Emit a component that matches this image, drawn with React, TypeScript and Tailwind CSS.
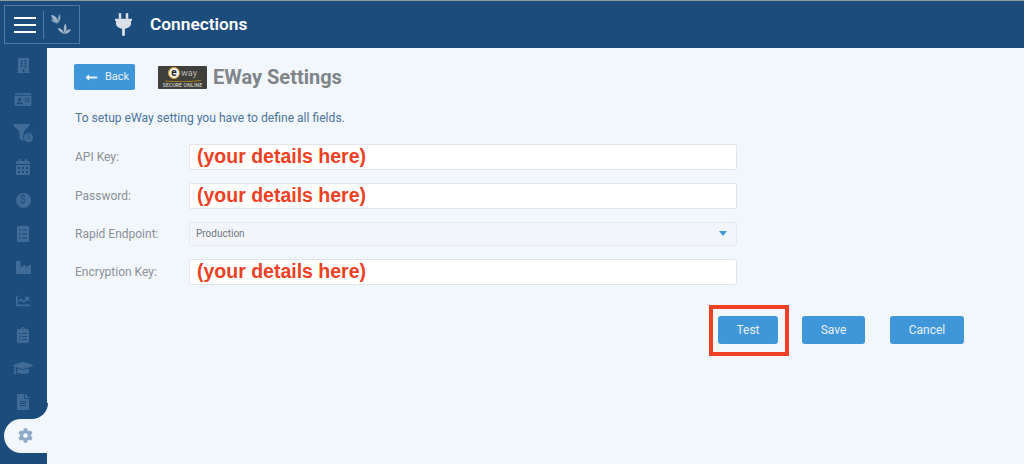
import {
  FaBuilding,
  FaCalendarAlt,
  FaChartLine,
  FaClipboardList,
  FaCog,
  FaFileAlt,
  FaFilter,
  FaGraduationCap,
  FaIdCard,
  FaIndustry,
  FaLongArrowAltLeft,
} from "react-icons/fa";

function CoinIcon() {
  return (
    <div className="flex h-[15px] w-[15px] items-center justify-center rounded-full bg-[#3f6b96] text-[10px] leading-none text-[#1b4c7c]">
      $
    </div>
  );
}

function FilterCoinIcon() {
  return (
    <div className="relative h-[18px] w-[20px]">
      <FaFilter className="h-[17px] w-[17px] text-[#3f6b96]" />
      <div className="absolute bottom-[-1px] right-[-1px] flex h-[11px] w-[11px] items-center justify-center rounded-full border border-[#1b4c7c] bg-[#3f6b96] text-[7px] leading-none text-[#1b4c7c]">
        $
      </div>
    </div>
  );
}

function ChecklistIcon() {
  return (
    <svg viewBox="0 0 12 16" className="h-[16px] w-[12px]">
      <rect width="12" height="16" rx="1" fill="#3f6b96" />
      <path d="M2 4h2M2 8h2M2 12h2M5.500 4H10M5.500 8H10M5.500 12H10" stroke="#1b4c7c" strokeWidth="1" />
    </svg>
  );
}

const navIcons = [
  <FaBuilding key="building" className="h-[17px] w-[13px]" />,
  <FaIdCard key="card" className="h-[15px] w-[18px]" />,
  <FilterCoinIcon key="filter" />,
  <FaCalendarAlt key="calendar" className="h-[16px] w-[14px]" />,
  <CoinIcon key="coin" />,
  <ChecklistIcon key="tasks" />,
  <FaIndustry key="industry" className="h-[15px] w-[17px]" />,
  <FaChartLine key="chart" className="h-[14px] w-[16px]" />,
  <FaClipboardList key="clipboard" className="h-[16px] w-[12px]" />,
  <FaGraduationCap key="cap" className="h-[16px] w-[20px]" />,
  <FaFileAlt key="file" className="h-[16px] w-[12px]" />,
];

function Sidebar() {
  return (
    <aside className="flex w-[47px] shrink-0 flex-col bg-[#1b4c7c] pt-[1px]">
      <div className="flex flex-col">
        {navIcons.map((icon, i) => (
          <div key={i} className="flex h-[33.6px] items-center justify-center pr-[1px] text-[#3f6b96]">
            {icon}
          </div>
        ))}
      </div>
      <div className="relative ml-[4px] flex h-[34px] w-[44px] items-center justify-center rounded-l-[17px] bg-[#f2f7fe] pr-[2px] text-[#8eaac6]">
        <FaCog className="h-[15px] w-[15px]" />
        {/* concave corner above the active item */}
        <div className="absolute bottom-[34px] right-0 h-[16px] w-[16px] bg-[#f2f7fe]">
          <div className="h-full w-full rounded-br-[16px] bg-[#1b4c7c]" />
        </div>
      </div>
    </aside>
  );
}

function LeafMark() {
  return (
    <svg viewBox="0 0 22 22" className="ml-[6px] h-[21px] w-[21px]" fill="#9fb4c8">
      <path d="M9 9C5 8 2 5 1 1c4 0 7 3 8 8z" />
      <path d="M9 9C8 6 8 3 10 0c2 3 1 6-1 9z" opacity=".8" />
      <path d="M9 10C6 10 3 9 1 6c3-1 6 1 8 4z" opacity=".8" />
      <path d="M15 21c-3-1-6-3-7-6 3-1 6 2 7 6z" />
      <path d="M15 20c-1-3-1-7 1-10 2 3 2 7-1 10z" />
      <path d="M15 21c1-3 3-5 7-5-1 3-4 5-7 5z" />
    </svg>
  );
}

function Header() {
  return (
    <header className="flex h-[48px] shrink-0 items-center border-t border-[#8f9aa3] bg-[#1b4c7c] pl-[4px]">
      <div className="flex h-[39px] w-[76px] items-center border border-[#4c7aa5] pl-[9px]">
        <div className="flex w-[22px] flex-col gap-[5px]">
          <div className="h-[2px] bg-white" />
          <div className="h-[2px] bg-white" />
          <div className="h-[2px] bg-white" />
        </div>
        <div className="ml-[7px] h-[28px] w-px bg-[#4c7aa5]" />
        <LeafMark />
      </div>
      <svg viewBox="0 0 18 24" className="ml-[35px] h-[23px] w-[17px]" fill="#d9e0e7">
        <rect x="4" y="0" width="2.6" height="6" />
        <rect x="11.4" y="0" width="2.6" height="6" />
        <path d="M0 6h18v2h-1v3c0 3-3 5-6.500 5.500V24h-3v-7.500C4 16 1 14 1 11V8H0z" />
      </svg>
      <h1 className="ml-[18px] text-[17.300px] font-semibold text-white">Connections</h1>
    </header>
  );
}

function EwayLogo() {
  return (
    <div className="flex h-[23px] w-[49px] flex-col items-center rounded-[1px] bg-[#3f3f3c]">
      <div className="flex h-[14px] items-center gap-[1px] pt-[1px]">
        <div className="flex h-[12px] w-[12px] items-center justify-center rounded-full border border-[#e49a1c] bg-[#f4f4f0] text-[10px] font-bold leading-none text-[#222]">
          e
        </div>
        <span className="text-[9px] leading-none text-[#b9b9b4]">way</span>
      </div>
      <svg viewBox="0 0 40 2" className="h-[2px] w-[40px]" fill="none" stroke="#c58a1e" strokeWidth="0.8">
        <path d="M2 1c12 1 24 1 36-0.500" />
      </svg>
      <span className="mt-[1px] whitespace-nowrap text-[5px] leading-none tracking-[0.2px] text-[#e2e2de]">
        SECURE ONLINE
      </span>
    </div>
  );
}

function TextField({ label }: { label: string }) {
  return (
    <div className="flex items-center">
      <label className="w-[115px] pl-[1px] text-[12px] text-[#8a9097]">{label}</label>
      <div className="flex h-[26px] w-[548px] items-center rounded-[2px] border border-[#e2e5e9] bg-white pl-[7px] font-['Liberation_Sans'] text-[19.500px] font-bold leading-none text-[#ee4023]">
        (your details here)
      </div>
    </div>
  );
}

function SelectField({ label, value }: { label: string; value: string }) {
  return (
    <div className="flex items-center">
      <label className="w-[115px] pl-[1px] text-[12px] text-[#8a9097]">{label}</label>
      <div className="flex h-[24px] w-[548px] items-center justify-between rounded-[2px] border border-[#e6e9ed] bg-[#f2f6fb] pb-[1px] pl-[6px] pr-[9px] text-[10px] text-[#70767d]">
        {value}
        <div className="h-0 w-0 border-x-[4px] border-t-[5px] border-x-transparent border-t-[#3f96d8]" />
      </div>
    </div>
  );
}

function ActionButton({ label, width }: { label: string; width: string }) {
  return (
    <button className={`block h-[28px] rounded-[3px] bg-[#3f96d8] text-[12px] text-[#e8f2fa] ${width}`}>
      {label}
    </button>
  );
}

export default function App() {
  return (
    <div className="flex h-[464px] w-[1024px] flex-col overflow-hidden bg-[#f2f7fe] font-['Roboto',sans-serif]">
      <Header />
      <div className="flex min-h-0 flex-1">
        <Sidebar />
        <main className="flex-1 pl-[27px] pt-[16px]">
          <div className="flex h-[26px] items-center">
            <button className="flex h-[26px] w-[61px] items-center rounded-[2px] bg-[#3f96d8] pl-[11px] text-[11px] text-[#e8f2fa]">
              <FaLongArrowAltLeft className="h-[13px] w-[13px]" />
              <span className="ml-[7px]">Back</span>
            </button>
            <div className="ml-[23px]">
              <EwayLogo />
            </div>
            <h2 className="ml-[6px] text-[20px] font-bold text-[#7f8589]">EWay Settings</h2>
          </div>
          <p className="ml-[1px] mt-[20px] text-[12.100px] leading-[16px] text-[#4d749c]">
            To setup eWay setting you have to define all fields.
          </p>
          <div className="mt-[18px] flex flex-col gap-[13px]">
            <TextField label="API Key:" />
            <TextField label="Password:" />
            <SelectField label="Rapid Endpoint:" value="Production" />
            <TextField label="Encryption Key:" />
          </div>
          <div className="mt-[20px] flex w-[890px] items-start justify-end">
            <div className="border-4 border-[#ee4023] pb-[8px] pl-[5px] pr-[7px] pt-[7px]">
              <ActionButton label="Test" width="w-[60px]" />
            </div>
            <div className="ml-[13px] mt-[11px]">
              <ActionButton label="Save" width="w-[63px]" />
            </div>
            <div className="ml-[25px] mt-[11px]">
              <ActionButton label="Cancel" width="w-[74px]" />
            </div>
          </div>
        </main>
      </div>
    </div>
  );
}
